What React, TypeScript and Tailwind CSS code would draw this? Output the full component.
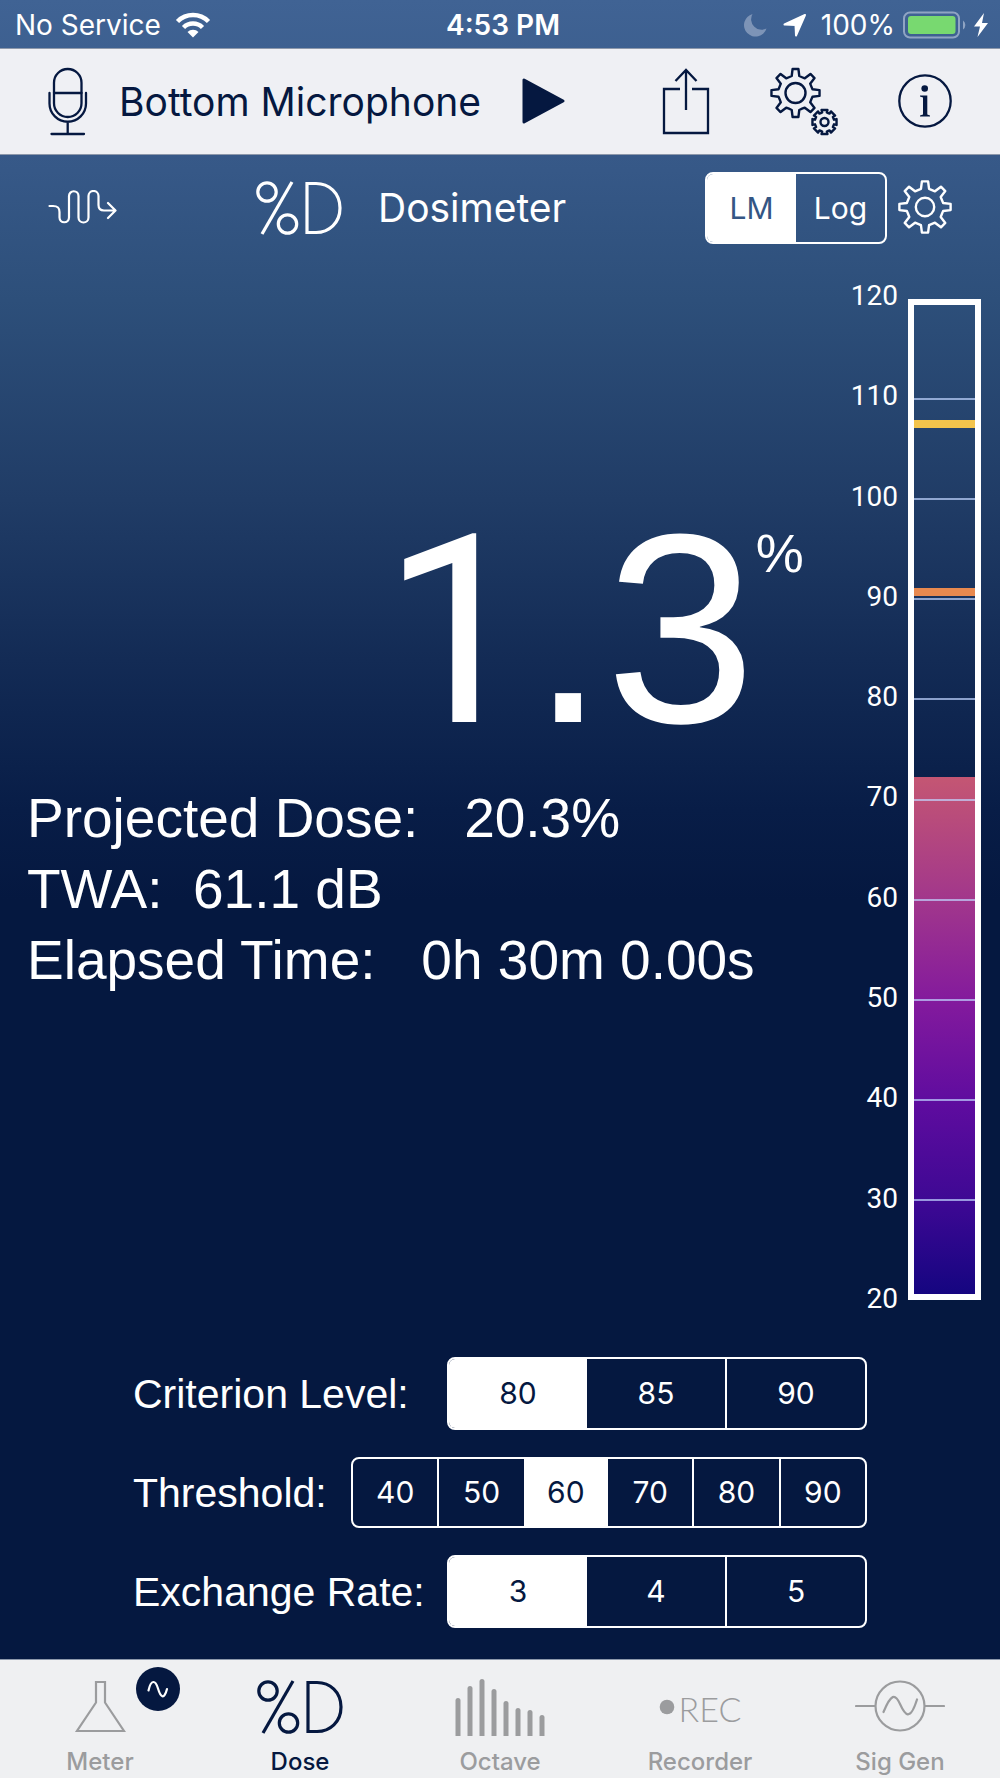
import React, { useState } from "react";

const NAVY = "#051840";

function gearPath(cx: number, cy: number, teeth: number, outer: number, inner: number, tip: number, base: number) {
  const step = (Math.PI * 2) / teeth;
  const pt = (r: number, a: number) =>
    `${(cx + r * Math.sin(a)).toFixed(2)} ${(cy - r * Math.cos(a)).toFixed(2)}`;
  let d = "";
  for (let i = 0; i < teeth; i++) {
    const a = i * step;
    d += `${i === 0 ? "M" : "L"}${pt(inner, a - base)} `;
    d += `L${pt(outer, a - tip)} L${pt(outer, a + tip)} L${pt(inner, a + base)} `;
    d += `Q${pt(inner * 0.98, a + step / 2)} ${pt(inner, a + step - base)} `;
  }
  return d + "Z";
}

function Gear() {
  return (
    <svg width="56" height="56" viewBox="0 0 56 56" fill="none" stroke="currentColor" strokeWidth="2.4" strokeLinejoin="round" aria-hidden="true">
      <path d={gearPath(28, 27, 8, 25.8, 18.6, 0.12, 0.22)} />
      <circle cx="28" cy="27" r="9.2" />
    </svg>
  );
}

function Gears() {
  return (
    <svg width="70" height="70" viewBox="0 0 70 70" fill="none" stroke="currentColor" strokeWidth="2.4" strokeLinejoin="round" aria-hidden="true">
      <path d={gearPath(25.5, 26, 8, 24.2, 17.4, 0.12, 0.22)} />
      <circle cx="25.5" cy="26" r="10" />
      <path d={gearPath(54.5, 55, 8, 12.4, 9.8, 0.24, 0.24)} />
      <circle cx="54.5" cy="55" r="4" />
    </svg>
  );
}

function PercentD() {
  return (
    <svg width="86" height="54" viewBox="0 0 86 54" fill="none" stroke="currentColor" strokeWidth="3.2" aria-hidden="true">
      <circle cx="11" cy="11" r="9.2" />
      <circle cx="31.5" cy="43" r="9.2" />
      <path d="M36 1 6 53" />
      <path d="M51 2.500H60C73 2.500 84 12 84 27S73 51.500 60 51.500H51Z" />
    </svg>
  );
}

type SegProps = {
  label: string;
  options: string[];
  initial: string;
  className: string;
  selectedText: string;
};

function Segmented({ label, options, initial, className, selectedText }: SegProps) {
  const [value, setValue] = useState(initial);
  const selected = options.indexOf(value);
  return (
    <div role="group" aria-label={label} className={`flex overflow-hidden rounded-lg border-2 border-white ${className}`}>
      {options.map((o, i) => (
        <button
          key={o}
          type="button"
          aria-pressed={o === value}
          onClick={() => setValue(o)}
          className={`flex-1 border-white text-center font-[Inter,sans-serif] text-[30px] ${
            i > 0 && i !== selected && i - 1 !== selected ? "border-l-2" : ""
          } ${o === value ? `bg-white ${selectedText}` : "text-white"}`}
        >
          {o}
        </button>
      ))}
    </div>
  );
}

function StatusBar() {
  return (
    <div className="grid h-12 grid-cols-[1fr_auto_1fr] items-center px-[15px] pt-0.5 text-[28px] leading-10 text-white">
      <div className="flex items-center gap-3.5">
        <span>No Service</span>
        <svg width="36" height="26" viewBox="0 0 36 26" fill="none" stroke="currentColor" aria-label="Wi-Fi">
          <path d="M2.500 9.500a22 22 0 0 1 31 0" strokeWidth="4.500" />
          <path d="M8.500 15.500a13.500 13.500 0 0 1 19 0" strokeWidth="4.500" />
          <path d="M18 25.500l-5.500-5.600a7.800 7.800 0 0 1 11 0Z" fill="currentColor" stroke="none" />
        </svg>
      </div>
      <time className="pl-1.5 font-semibold">4:53 PM</time>
      <div className="flex items-center justify-end">
        <svg width="23" height="24" viewBox="0 0 23 24" fill="#7d94b7" aria-label="Do not disturb" className="mr-4">
          <path d="M8.500 1A11.500 11.500 0 1 0 22.500 15.500 10.500 10.500 0 0 1 8.500 1Z" />
        </svg>
        <svg width="24" height="24" viewBox="0 0 24 24" fill="currentColor" stroke="currentColor" strokeWidth="2" strokeLinejoin="round" aria-label="Location" className="mr-3.5">
          <path d="M22 2 1.500 11.500 12.500 12 13 22.500Z" />
        </svg>
        <span className="mr-2">100%</span>
        <svg width="64" height="28" viewBox="0 0 64 28" fill="none" aria-label="Battery charging" className="mr-1.5">
          <rect x="1" y="1.500" width="55" height="25" rx="6" stroke="#8fa4c3" strokeWidth="2" />
          <rect x="5" y="5" width="47.500" height="18" rx="3" fill="#78d970" />
          <path d="M60 9.500a5.500 5.500 0 0 1 0 9Z" fill="#8fa4c3" />
        </svg>
        <svg width="16" height="26" viewBox="0 0 16 26" fill="currentColor" aria-label="Charging" className="-mr-1">
          <path d="M11 1 1 14.500H7L4.500 25 15 11H9Z" />
        </svg>
      </div>
    </div>
  );
}

function NavBar() {
  return (
    <header className="flex h-[107px] items-center border-y border-[#8d98ab] bg-[#eff0f4] pr-12 pl-[46px] text-[#051840]">
      <button type="button" className="flex items-center gap-[29px]">
        <svg width="44" height="70" viewBox="0 0 44 70" fill="none" stroke="currentColor" strokeWidth="2.300" strokeLinecap="round" aria-hidden="true">
          <rect x="8" y="2" width="27.500" height="48" rx="13.750" />
          <path d="M8 26H35.500M3.500 26V36.500a18.200 18.200 0 0 0 36.500 0V26M21.700 55V67M5.500 67H38" />
        </svg>
        <span className="text-[39px] leading-[48px]">Bottom Microphone</span>
      </button>
      <button type="button" aria-label="Start measurement" className="mr-auto ml-10">
        <svg width="46" height="50" viewBox="0 0 46 50" fill="currentColor" stroke="currentColor" strokeWidth="3" strokeLinejoin="round" aria-hidden="true">
          <path d="M3 3V45L42 24Z" />
        </svg>
      </button>
      <button type="button" aria-label="Share" className="mr-[60px]">
        <svg width="48" height="70" viewBox="0 0 48 70" fill="none" stroke="currentColor" strokeWidth="2.300" aria-hidden="true">
          <path d="M18 22H2V66H46V22H30M24 43V3M13.500 14 24 3 34.500 14" />
        </svg>
      </button>
      <button type="button" aria-label="Settings" className="mr-[58px]">
        <Gears />
      </button>
      <button type="button" aria-label="Information">
        <svg width="54" height="56" viewBox="0 0 54 56" fill="none" stroke="currentColor" strokeWidth="2.300" aria-hidden="true">
          <circle cx="27" cy="27" r="25.700" />
          <circle cx="26.700" cy="14.500" r="3.300" fill="currentColor" stroke="none" />
          <path d="M22 21.500H29.300V40.500L32 41.500V42.500H22V41.500L25 40.500V23.500L22 22.500Z" fill="currentColor" stroke="none" />
        </svg>
      </button>
    </header>
  );
}

function Toolbar() {
  return (
    <div className="flex items-center pt-[17px] pr-[47px] pl-12 text-white">
      <button type="button" aria-label="Weighting" className="mr-[138px]">
        <svg width="70" height="36" viewBox="0 0 70 36" fill="none" stroke="currentColor" strokeWidth="2.200" strokeLinecap="round" strokeLinejoin="round" aria-hidden="true">
          <path d="M1.500 16H5C10 16 11.500 18 11.500 22V27.500A4.750 4.750 0 0 0 21 27.500V6A4.750 4.750 0 0 1 30.500 6V27.500A4.750 4.750 0 0 0 40.500 27.500V6A4.750 4.750 0 0 1 50.500 6V15C50.500 19 52.500 20.500 56 20.500H67M60 13 67.500 20.500 60 28" />
        </svg>
      </button>
      <PercentD />
      <h1 className="mr-auto ml-9 text-[39px] leading-[48px]">Dosimeter</h1>
      <Segmented label="Meter mode" options={["LM", "Log"]} initial="LM" className="mr-2.5 h-[72px] w-[182px]" selectedText="text-[#345684]" />
      <button type="button" aria-label="Dosimeter settings">
        <Gear />
      </button>
    </div>
  );
}

const SCALE = [120, 110, 100, 90, 80, 70, 60, 50, 40, 30, 20];

function LevelGauge() {
  const level = 72.2;
  const marks = [
    { at: 107.5, color: "bg-[#f3c44c]" },
    { at: 90.7, color: "bg-[#e8894f]" },
  ];
  return (
    <div className="flex shrink-0 gap-2.5 pr-[19px] font-[Roboto,'Liberation_Sans',sans-serif] text-[28px] text-white">
      <div className="-mt-[19px] -mb-[15px] flex flex-col justify-between text-right leading-8">
        {SCALE.map((n) => (
          <span key={n}>{n}</span>
        ))}
      </div>
      <div role="meter" aria-label="Sound level" aria-valuemin={20} aria-valuemax={120} aria-valuenow={level} className="relative w-[73px]">
        <div
          className="absolute inset-x-1 bottom-0 bg-[linear-gradient(to_top,#12057f_0%,#3c0893_18%,#5f0c9f_38%,#831a9d_57%,#a1368c_76%,#c45673_100%)]"
          style={{ height: `${level - 20}%` }}
        />
        {SCALE.slice(1, -1).map((n) => (
          <div key={n} className="absolute inset-x-1 h-0.5 translate-y-1/2 bg-[#c0d4ff]/70" style={{ bottom: `${n - 20}%` }} />
        ))}
        {marks.map((m) => (
          <div key={m.at} className={`absolute inset-x-1 h-2 translate-y-1/2 ${m.color}`} style={{ bottom: `${m.at - 20}%` }} />
        ))}
        <div className="absolute inset-0 border-6 border-white" />
      </div>
    </div>
  );
}

function Readouts() {
  return (
    <div className="min-w-0 flex-1 pl-[27px] font-['Liberation_Sans',sans-serif] text-white">
      <div className="flex items-start justify-end pt-[200px]">
        <span className="text-[270px] leading-[260px]">
          <span className="font-[Roboto,sans-serif] text-[264px]">1</span>.3
        </span>
        <span className="mr-[47px] pt-6 text-[54px] leading-[60px]">%</span>
      </div>
      <div className="mt-[21px] text-[55px] leading-[71px] whitespace-pre">
        <p>Projected Dose:   20.3%</p>
        <p>TWA:  61.1 dB</p>
        <p>Elapsed Time:   0h 30m 0.00s</p>
      </div>
    </div>
  );
}

const SETTINGS = [
  { label: "Criterion Level:", options: ["80", "85", "90"], initial: "80", size: "w-[420px] h-[73px]" },
  { label: "Threshold:", options: ["40", "50", "60", "70", "80", "90"], initial: "60", size: "w-[516px] h-[71px]" },
  { label: "Exchange Rate:", options: ["3", "4", "5"], initial: "3", size: "w-[420px] h-[73px]" },
];

function DoseSettings() {
  return (
    <div className="flex flex-col gap-[27px] px-[133px] pt-[57px] pb-[31px] text-white">
      {SETTINGS.map((s) => (
        <div key={s.label} className="flex items-center justify-between">
          <span className="font-['Liberation_Sans',sans-serif] text-[41px] leading-[48px]">{s.label}</span>
          <Segmented label={s.label} options={s.options} initial={s.initial} className={s.size} selectedText="text-[#051840]" />
        </div>
      ))}
    </div>
  );
}

const BARS = [38, 50, 57, 47, 35, 28, 26, 21];

function TabBar() {
  const tabs = [
    {
      name: "Meter",
      icon: (
        <span className="relative">
          <svg width="52" height="54" viewBox="0 0 52 54" fill="none" stroke="currentColor" strokeWidth="2.200" aria-hidden="true">
            <path d="M22 2H31V22.500L50 51H3L22 22.500Z" />
          </svg>
          <svg width="44" height="44" viewBox="0 0 44 44" className="absolute -top-[13px] left-[62px]" aria-hidden="true">
            <circle cx="22" cy="22" r="22" fill={NAVY} />
            <path d="M12.500 23.500C15 12 19.500 13 22 21.500S28 33.500 31 22" fill="none" stroke="#fff" strokeWidth="2.200" strokeLinecap="round" />
          </svg>
        </span>
      ),
    },
    { name: "Dose", icon: <PercentD /> },
    {
      name: "Octave",
      icon: (
        <svg width="90" height="58" viewBox="0 0 90 58" fill="currentColor" aria-hidden="true">
          {BARS.map((h, i) => (
            <path key={i} d={`M${i * 12 + 0.5} 58V${60.5 - h}a2.500 2.500 0 0 1 5 0V58Z`} />
          ))}
        </svg>
      ),
    },
    {
      name: "Recorder",
      icon: (
        <span className="flex items-center gap-1">
          <svg width="16" height="16" viewBox="0 0 16 16" fill="currentColor" aria-hidden="true">
            <circle cx="8" cy="8" r="7.300" />
          </svg>
          <span className="pt-1 font-[Lato,sans-serif] text-[34px] leading-10 font-light">REC</span>
        </span>
      ),
    },
    {
      name: "Sig Gen",
      icon: (
        <svg width="90" height="54" viewBox="0 0 90 54" fill="none" stroke="currentColor" strokeWidth="2.200" strokeLinecap="round" aria-hidden="true">
          <circle cx="45" cy="26" r="24.500" />
          <path d="M1 26H20M70 26H89M28.500 32C36 14 40 13 45 24S55 42 62 19.500" />
        </svg>
      ),
    },
  ];
  return (
    <nav aria-label="Modes" className="grid h-[119px] grid-cols-5 border-t border-[#8d98ab] bg-[#eff0f2]">
      {tabs.map((t) => (
        <a
          key={t.name}
          href={`#${t.name.toLowerCase().replace(" ", "-")}`}
          aria-current={t.name === "Dose" ? "page" : undefined}
          className={`flex flex-col items-center pt-4 text-2xl font-medium ${t.name === "Dose" ? "text-[#051840]" : "text-[#9b9c9e]"}`}
        >
          <span className="flex h-[62px] items-center">{t.icon}</span>
          <span className="mt-2 leading-8">{t.name}</span>
        </a>
      ))}
    </nav>
  );
}

export default function App() {
  return (
    <div className="flex min-h-screen flex-col bg-[#051840] bg-[linear-gradient(to_bottom,#406394_0px,#365887_170px,#2d4f7a_300px,#203c66_500px,#132b55_660px,#081d47_810px,#051840_900px)] font-[Inter,sans-serif]">
      <StatusBar />
      <NavBar />
      <main className="flex flex-1 flex-col">
        <Toolbar />
        <div className="mt-[55px] flex flex-1">
          <Readouts />
          <LevelGauge />
        </div>
        <DoseSettings />
      </main>
      <TabBar />
    </div>
  );
}
